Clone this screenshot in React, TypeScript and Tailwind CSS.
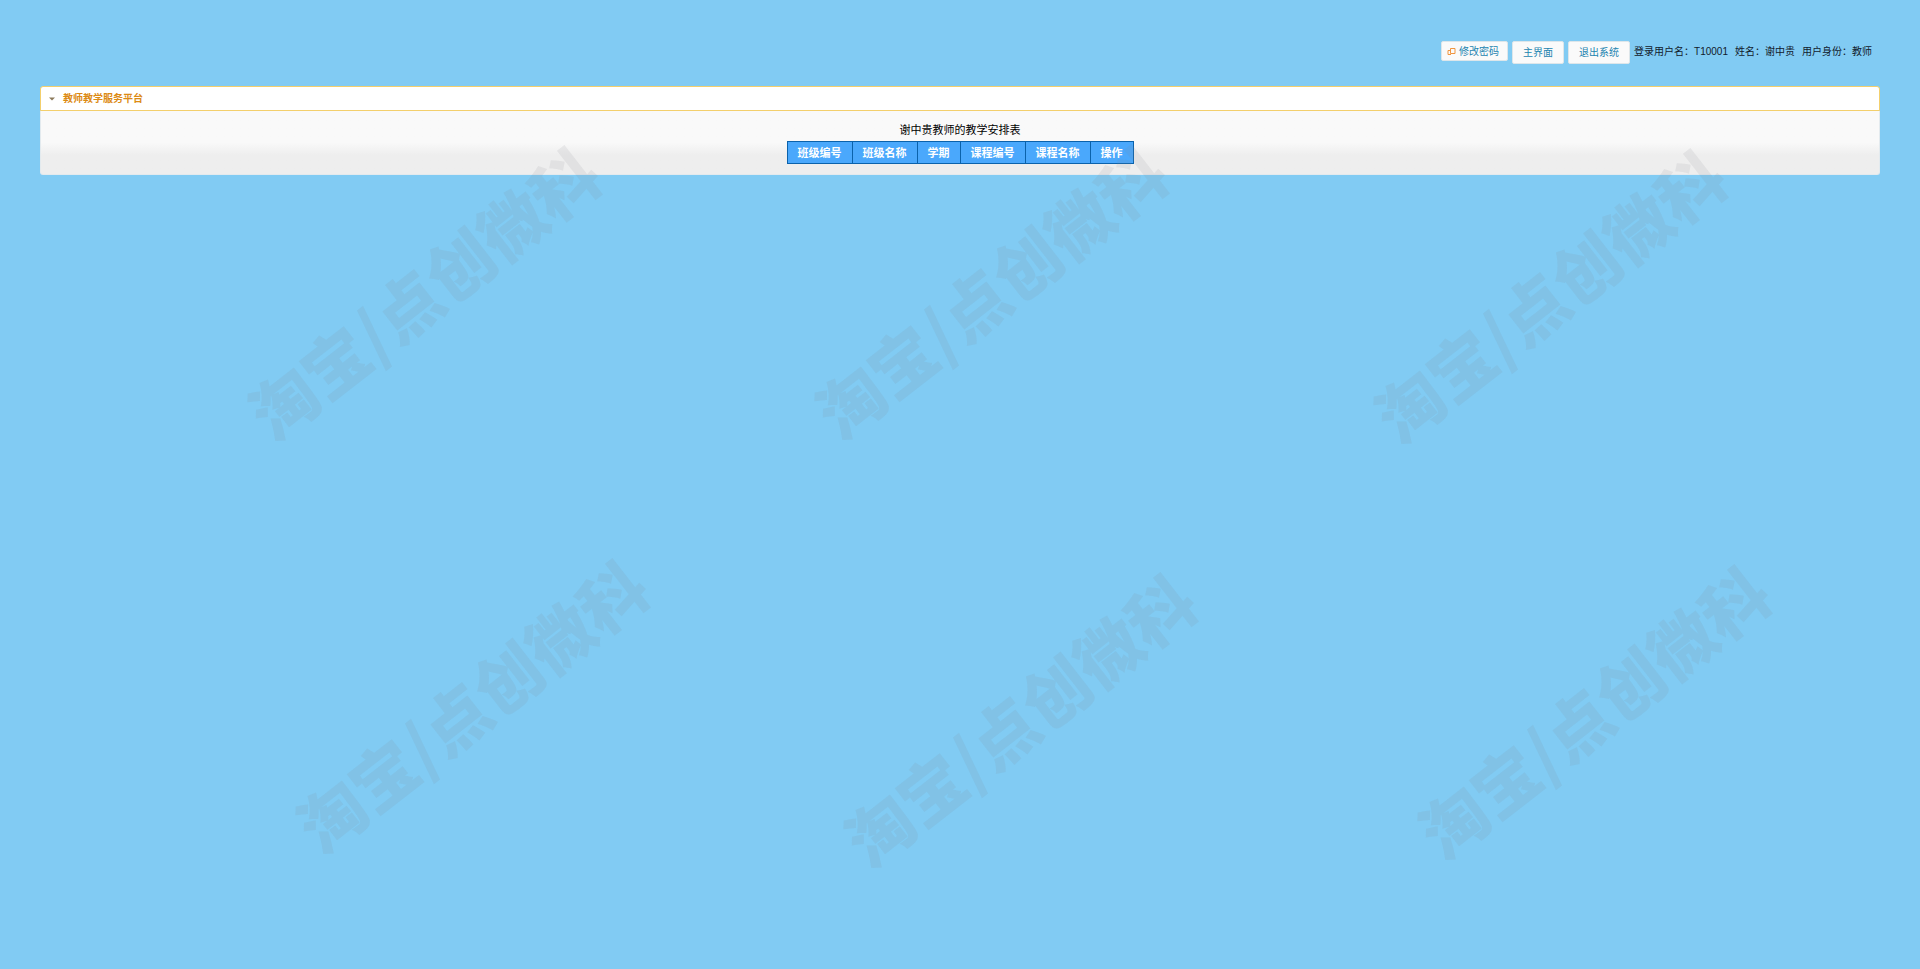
import React, { useState } from 'react';

const COLUMNS = ['班级编号', '班级名称', '学期', '课程编号', '课程名称', '操作'];

const USER = { account: 'T10001', name: '谢中贵', role: '教师' };

// centre of every mark, in percent of the page
const MARKS = [
  { x: 22, y: 30 },
  { x: 51.5, y: 29.9 },
  { x: 80.6, y: 30.3 },
  { x: 24.5, y: 72.7 },
  { x: 53, y: 74.1 },
  { x: 82.9, y: 73.3 },
];

const BUTTON = 'flex items-center rounded-[2px] border border-[#dde6ea] bg-[#fafafa] text-[10px] text-[#1c84b0] hover:bg-white';

const Watermark: React.FC = () => (
  <div aria-hidden="true" className="pointer-events-none absolute inset-0 overflow-hidden">
    {MARKS.map((mark) => (
      <span
        key={`${mark.x}-${mark.y}`}
        className="absolute -translate-x-1/2 -translate-y-1/2 -rotate-38 whitespace-nowrap font-['Noto_Sans_CJK_SC',sans-serif] text-[66px] leading-none font-black text-[#80868c]/12"
        style={{ left: `${mark.x}%`, top: `${mark.y}%` }}
      >
        淘宝/点创微科
      </span>
    ))}
  </div>
);

const TopBar: React.FC = () => (
  <header className="flex items-start justify-end gap-1 pr-2">
    <button type="button" className={`${BUTTON} h-5 gap-[3px] pr-2 pl-[5px]`}>
      <svg viewBox="0 0 9 9" className="size-[9px]" fill="none" stroke="#f0953f" strokeWidth="1">
        <path d="M3.500 1.500h4.500v5h-4.500z" />
        <path d="M3 3.500H1v4h3" />
      </svg>
      修改密码
    </button>
    <button type="button" className={`${BUTTON} h-[23px] px-[10px]`}>主界面</button>
    <button type="button" className={`${BUTTON} h-[23px] px-[10px]`}>退出系统</button>
    <p className="flex h-[21px] items-center gap-[7px] text-[10px] text-[#12202c]">
      <span>登录用户名：{USER.account}</span>
      <span>姓名：{USER.name}</span>
      <span>用户身份：{USER.role}</span>
    </p>
  </header>
);

const ScheduleTable: React.FC = () => (
  <table className="mx-auto border-collapse text-[11px] leading-4">
    <caption className="pb-[3px] text-black">{USER.name}教师的教学安排表</caption>
    <thead>
      <tr>
        {COLUMNS.map((column) => (
          <th key={column} scope="col" className="border border-[#0b62ab] bg-[#4aa8fc] px-[10px] pt-[3px] pb-[2px] font-bold text-white">
            {column}
          </th>
        ))}
      </tr>
    </thead>
  </table>
);

const App: React.FC = () => {
  const [open, setOpen] = useState(true);

  return (
    <div className="relative min-h-screen bg-[#81cbf3] px-10 pt-[41px] font-['Liberation_Sans','Noto_Sans_CJK_SC',sans-serif]">
      <TopBar />

      <main className="mt-[22px]">
        <h1>
          <button
            type="button"
            aria-expanded={open}
            onClick={() => setOpen(!open)}
            className="flex h-[25px] w-full items-center gap-2 rounded-t-[3px] border border-[#f3cf6c] bg-white px-2 text-[10px] font-bold text-[#dc8a14]"
          >
            <svg viewBox="0 0 6 4" className="h-1 w-[6px]" fill="#8c7a5c">
              <path d="M0 .5h6L3 3.500z" />
            </svg>
            教师教学服务平台
          </button>
        </h1>
        {open && (
          <section className="rounded-b-[3px] border border-t-0 border-[#e3eaee] bg-linear-to-b from-[#f9f9f9] from-50% to-[#eeeeee] to-70% px-4 pt-[11px] pb-[10px]">
            <ScheduleTable />
          </section>
        )}
      </main>

      <Watermark />
    </div>
  );
};

export default App;
